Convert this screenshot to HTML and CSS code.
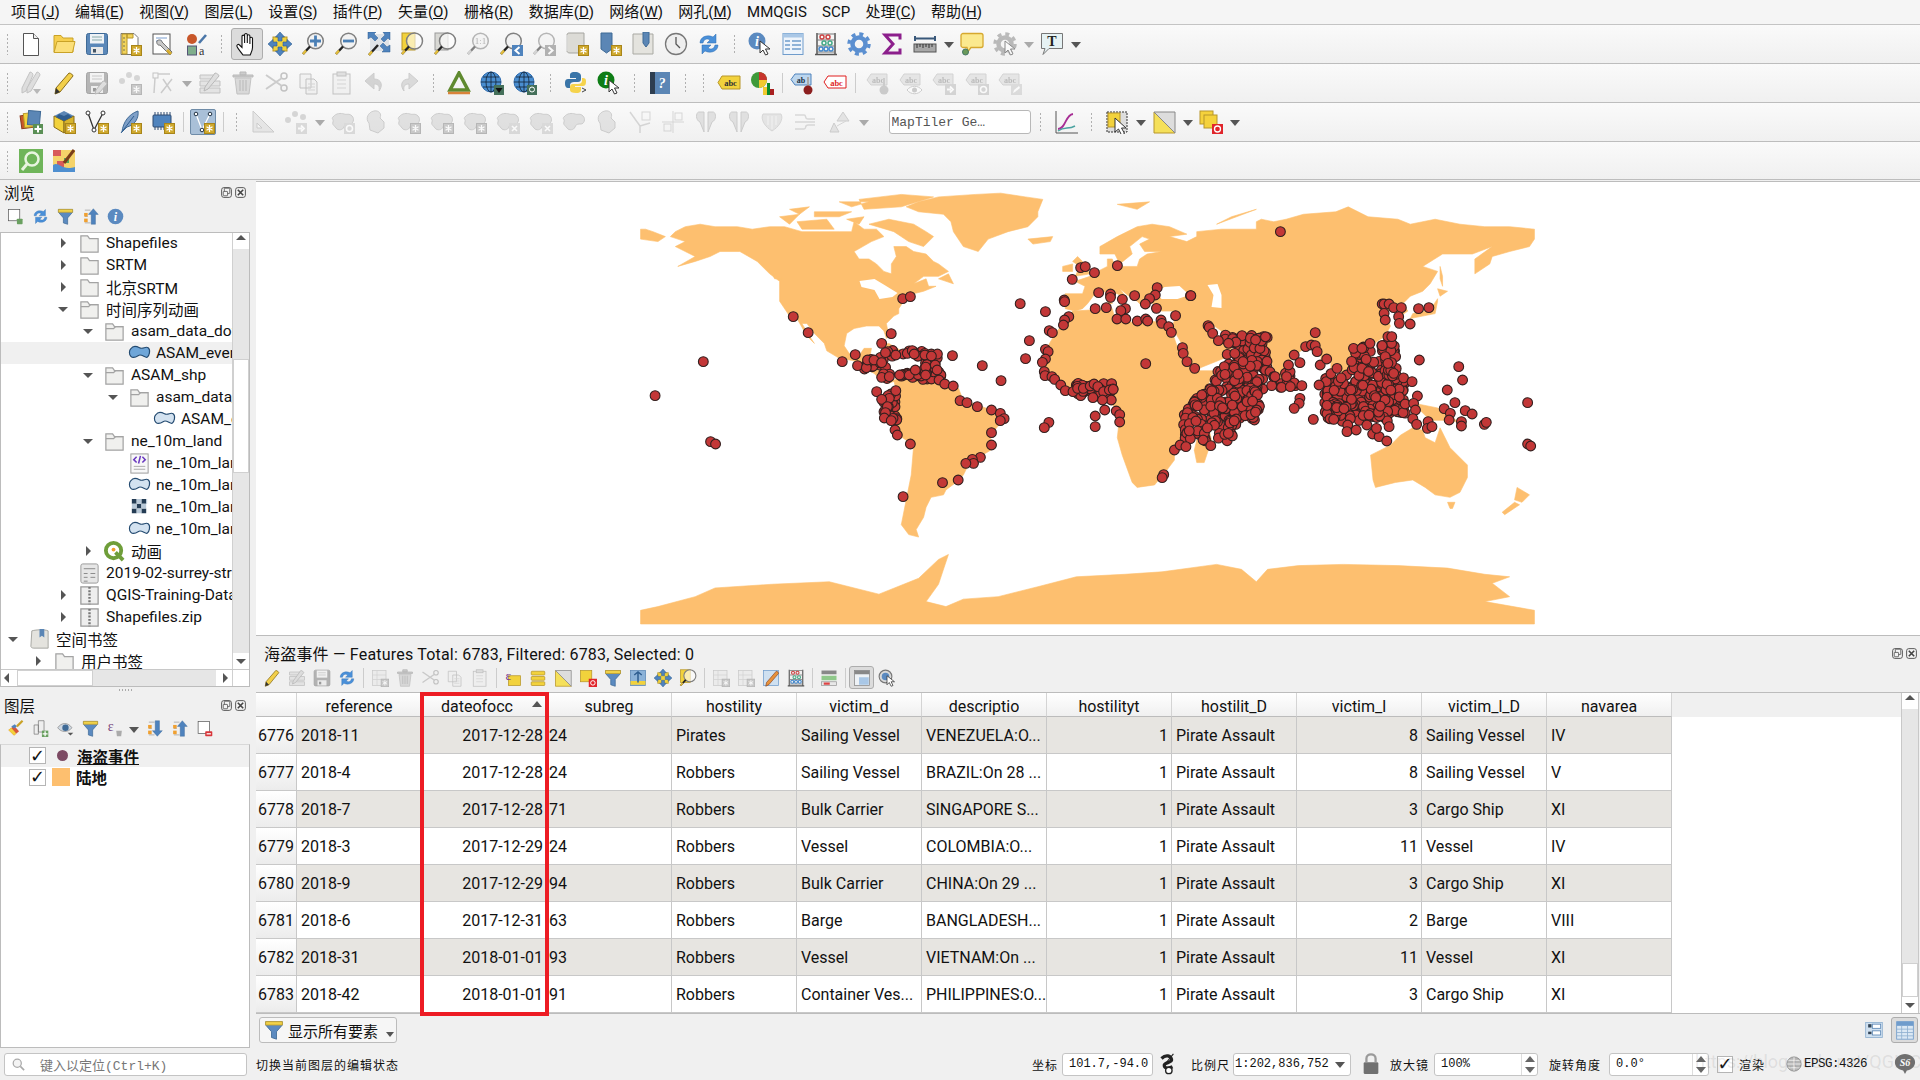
FILE: index.html
```html
<!DOCTYPE html>
<html lang="zh-CN">
<head>
  <meta charset="UTF-8"/>
  <title>QGIS</title>
  <link rel="stylesheet" href="styles.css">
</head>
<body>
  <!-- icon set -->
  <svg class="defs" aria-hidden="true">
    <symbol id="badge" viewBox="0 0 24 24"><rect x="13.5" y="13.5" width="10" height="10" fill="#cfa82c" stroke="#a8851a"/><path d="M18.5 15v7M15.5 16.7l6 3.6M21.5 16.7l-6 3.6" stroke="#fff" stroke-width="1.3"/></symbol>
    <symbol id="cursor" viewBox="0 0 24 24"><path d="M12 9v12l3-3 2.5 5 2.5-1-2.5-5H22z" fill="#fff" stroke="#333"/></symbol>
    <symbol id="mag" viewBox="0 0 24 24"><circle cx="14.5" cy="9" r="7.8" fill="#f2f2f2" stroke="#808080" stroke-width="1.5"/><path d="M9 14.5 2 22" stroke="#222" stroke-width="2.4"/><path d="M5 18.5 2 22" stroke="#e3bd3c" stroke-width="2.4"/></symbol>
    <symbol id="blob" viewBox="0 0 24 24"><path d="M2 7c3-4 8-4 11-3s5-1 8 2 1 8-2 8-5 0-6 3-6 4-8 1-4-3-3-6-2-3 0-5z" fill="#cfcfc9" stroke="#a9a9a3"/></symbol>
    <symbol id="tag" viewBox="0 0 24 24"><path d="M5 3h16v11H5l-4-5z" fill="#d8d8d2" stroke="#b5b5af"/><text x="12" y="12" class="svgt" font-size="8" fill="#8c8c88" text-anchor="middle">abc</text></symbol>
    <symbol id="new" viewBox="0 0 24 24"><path d="M4.5 1.5h10l5 5v17h-15z" fill="#fff" stroke="#555"/><path d="M14.5 1.5v5h5" fill="#eee" stroke="#555"/></symbol>
    <symbol id="open" viewBox="0 0 24 24"><path d="M2 3.500h7l2 2.500h10v14H2z" fill="#f6cf4e" stroke="#c9a227"/><path d="M2 20.500 5 9.500h18l-2.500 11z" fill="#fbdf7a" stroke="#c9a227"/></symbol>
    <symbol id="save" viewBox="0 0 24 24"><rect x="1.500" y="1.500" width="21" height="21" rx="2" fill="#5a87b8" stroke="#3f6a96"/><rect x="5" y="2" width="14" height="9.500" fill="#eef2f6"/><path d="M7 5h10M7 8h10" stroke="#8aa"/><rect x="6" y="15" width="12" height="7" fill="#e8e8e8"/><rect x="8" y="17" width="3" height="3.500" fill="#456"/></symbol>
    <symbol id="saveas" viewBox="0 0 24 24"><path d="M3 1.500h13l4 4v17H3z" fill="#fff" stroke="#777"/><path d="M4 2h5v20H4zM9 2h6v4H9z" fill="#f2d45c" stroke="#b7962a"/><path d="M5 6h2M5 10h2M5 14h2M5 18h2" stroke="#775"/><use href="#badge"/></symbol>
    <symbol id="props" viewBox="0 0 24 24"><rect x="2" y="2" width="17" height="20" fill="#fff" stroke="#555"/><path d="M5 6h11M5 9h6" stroke="#7b9ecf"/><path d="M6 9c2-2 5-1 5 1l10 10-2 3L9 13c-2 1-4-2-3-4z" fill="#c9c9c9" stroke="#555" stroke-width=".8"/><path d="m16 18 4 4" stroke="#d8ae2e" stroke-width="3"/></symbol>
    <symbol id="style" viewBox="0 0 24 24"><circle cx="8" cy="7" r="5" fill="#c8572a"/><path d="m15 11 7-8" stroke="#4a76a8" stroke-width="2.600"/><rect x="3.500" y="14" width="9" height="9" fill="#7fae8c" stroke="#557"/><text x="15" y="23" class="svgs" font-size="12" fill="#333">a</text></symbol>
    <symbol id="hand" viewBox="0 0 24 24"><path d="M8 23c-2-3-5-6-6-8.500-.6-1.700 1.300-2.800 2.500-1.500L7 15.500V4.500c0-1.800 2.600-1.800 2.600 0V11 2.800c0-1.800 2.700-1.800 2.700 0V11 4c0-1.700 2.600-1.700 2.600 0v8V6.500c0-1.600 2.600-1.600 2.600 0v9c0 3-1.300 5-2.300 7.500z" fill="#fff" stroke="#111" stroke-width="1.100"/></symbol>
    <symbol id="pansel" viewBox="0 0 24 24"><rect x="5" y="5" width="14" height="14" fill="#f2d23c" stroke="#b7962a"/><path d="m12 0 4.500 5h-2.500v4h-4V5H7.500zm0 24-4.500-5H10v-4h4v4h2.500zM0 12l5-4.500V10h4v4H5v2.500zm24 0-5 4.500V14h-4v-4h4V7.500z" fill="#4f83bd" stroke="#2e5d90" stroke-width=".6"/></symbol>
    <symbol id="zoomin" viewBox="0 0 24 24"><use href="#mag"/><path d="M14.500 3.500v11M9 9h11" stroke="#4a7fb5" stroke-width="2.800"/></symbol>
    <symbol id="zoomout" viewBox="0 0 24 24"><use href="#mag"/><path d="M9 9h11" stroke="#4a7fb5" stroke-width="2.800"/></symbol>
    <symbol id="zoomfull" viewBox="0 0 24 24"><rect x="3" y="2" width="19" height="17" fill="#dfe3e8"/><path d="M1 0h8L7 2l4 4-3 3-4-4-3 2zM23 0v8l-2-2-4 4-3-3 4-4-2-3zM23 20h-8l2-2-4-4 3-3 4 4 3-2z" fill="#4f83bd" stroke="#2e5d90" stroke-width=".5"/><path d="M11 13 2 23" stroke="#222" stroke-width="2.400"/><path d="M5 19.500 2 23" stroke="#e3bd3c" stroke-width="2.400"/></symbol>
    <symbol id="zoomsel" viewBox="0 0 24 24"><rect x="2" y="1" width="13" height="17" fill="#f2d23c" stroke="#b7962a"/><circle cx="14.500" cy="9" r="8" fill="#fff" fill-opacity=".6" stroke="#808080" stroke-width="1.500"/><path d="M9 14.500 2 22" stroke="#222" stroke-width="2.400"/><path d="M5 18.500 2 22" stroke="#e3bd3c" stroke-width="2.400"/></symbol>
    <symbol id="zoomlay" viewBox="0 0 24 24"><rect x="2" y="1" width="13" height="17" fill="#d8d8d4" stroke="#999"/><circle cx="14.500" cy="9" r="8" fill="#fff" fill-opacity=".7" stroke="#808080" stroke-width="1.500"/><path d="M9 14.500 2 22" stroke="#222" stroke-width="2.400"/><path d="M5 18.500 2 22" stroke="#e3bd3c" stroke-width="2.400"/></symbol>
    <symbol id="zoom11" viewBox="0 0 24 24"><use href="#mag"/><text x="14.500" y="12" class="svgs" font-size="9" fill="#777" text-anchor="middle">1:1</text></symbol>
    <symbol id="zoomlast" viewBox="0 0 24 24"><use href="#mag"/><rect x="13" y="13" width="11" height="11" fill="#4f83bd"/><path d="m20.500 15-4 3.500 4 3.500" fill="none" stroke="#fff" stroke-width="2"/></symbol>
    <symbol id="zoomnext" viewBox="0 0 24 24"><use href="#mag"/><rect x="13" y="13" width="11" height="11" fill="#4f83bd"/><path d="m16.500 15 4 3.500-4 3.500" fill="none" stroke="#fff" stroke-width="2"/></symbol>
    <symbol id="bmknew" viewBox="0 0 24 24"><path d="M2 3c0-1.500 1-2 2-2h15v20H5c-2 0-3-1-3-2z" fill="#dcdbd6" stroke="#a5a5a0"/><path d="M2 3v16" stroke="#eee"/><use href="#badge"/></symbol>
    <symbol id="bmk" viewBox="0 0 24 24"><path d="M3 1h11v16l-5.500 4L3 17z" fill="#5b86b5" stroke="#3f6a96"/><use href="#badge"/></symbol>
    <symbol id="bmkdoc" viewBox="0 0 24 24"><path d="M2 2h20v20H2z" fill="#e4e3de" stroke="#a9a9a3"/><path d="M12 0h6v11l-3 4-3-4z" fill="#5b86b5" stroke="#3f6a96"/></symbol>
    <symbol id="clock" viewBox="0 0 24 24"><circle cx="12" cy="12" r="10.500" fill="#eee" stroke="#777" stroke-width="1.300"/><path d="M12 5v7l4 4" fill="none" stroke="#555" stroke-width="1.300"/></symbol>
    <symbol id="refresh" viewBox="0 0 24 24"><path d="M3 11c0-6 7-9 13-6l3-3v9h-9l3-3c-3-2-6-1-7 3z" fill="#4a90d9" stroke="#2e6cb0" stroke-width=".5"/><path d="M21 13c0 6-7 9-13 6l-3 3v-9h9l-3 3c3 2 6 1 7-3z" fill="#4a90d9" stroke="#2e6cb0" stroke-width=".5"/></symbol>
    <symbol id="ident" viewBox="0 0 24 24"><circle cx="9" cy="9" r="8.500" fill="#5b8ac0"/><text x="9" y="14" class="svgb" font-size="14" fill="#fff" text-anchor="middle">i</text><use href="#cursor"/></symbol>
    <symbol id="table" viewBox="0 0 24 24"><rect x="2" y="1.500" width="20" height="21" fill="#eef4fb" stroke="#6f9ccc"/><rect x="2" y="1.500" width="20" height="4" fill="#a9c7e6"/><path d="M4 9h5M11 9h9M4 13h5M11 13h9M4 17h5M11 17h9" stroke="#6f9ccc" stroke-width="1.400"/></symbol>
    <symbol id="abacus" viewBox="0 0 24 24"><path d="M3 1v21M21 1v21M1 22.500h22" stroke="#555" stroke-width="1.500"/><path d="M3 2h18M3 8h18M3 14h18M3 20h18" stroke="#777"/><g fill="none" stroke-width="1.500"><circle cx="8" cy="5" r="2" stroke="#c44"/><circle cx="14" cy="5" r="2" stroke="#c44"/><circle cx="10" cy="11" r="2" stroke="#4a8"/><circle cx="16" cy="11" r="2" stroke="#4a8"/><circle cx="7" cy="17" r="2" stroke="#48c"/><circle cx="12" cy="17" r="2" stroke="#48c"/><circle cx="17" cy="17" r="2" stroke="#48c"/></g></symbol>
    <symbol id="gear" viewBox="0 0 24 24"><circle cx="12" cy="12" r="6.500" fill="none" stroke="#5b8fd0" stroke-width="4.500"/><circle cx="12" cy="12" r="10" fill="none" stroke="#5b8fd0" stroke-width="3.500" stroke-dasharray="4 3.850"/></symbol>
    <symbol id="sigma" viewBox="0 0 24 24"><path d="M20 7.500V3H5l8 9-8 9h15v-4.500" fill="none" stroke="#8c1f8c" stroke-width="3"/></symbol>
    <symbol id="ruler" viewBox="0 0 24 24"><path d="M2 6.500h20M2 4v5M22 4v5" stroke="#39587a" stroke-width="2"/><rect x="1" y="12" width="22" height="8" fill="#a8a8a8" stroke="#555"/><path d="M4 12v4M7 12v3M10 12v4M13 12v3M16 12v4M19 12v3" stroke="#333"/></symbol>
    <symbol id="tip" viewBox="0 0 24 24"><path d="M3 1.500h18c1 0 2 1 2 2v10c0 1-1 2-2 2H11l-3 4-1-4H3c-1 0-2-1-2-2v-10c0-1 1-2 2-2z" fill="#fbe98e" stroke="#d6a82e" stroke-width="1.300"/><circle cx="5.500" cy="20" r="3" fill="#6a9a5a" stroke="#476"/></symbol>
    <symbol id="gearq" viewBox="0 0 24 24"><use href="#gear"/><use href="#cursor"/></symbol>
    <symbol id="tbub" viewBox="0 0 24 24"><path d="M1.500 1.500h21v15H9l-6 6 2-6H1.500z" fill="#e6f2f4" stroke="#777"/><text x="12" y="14" class="svgs" font-size="14" fill="#222" text-anchor="middle" font-weight="700">T</text></symbol>
    <symbol id="pencil" viewBox="0 0 24 24"><path d="M17 2c2 0 4 2 4 3L8 21l-5 2 1-6z" fill="#f2cf4a" stroke="#8a6d1a"/><path d="m3 23 1-6 4 4z" fill="#333"/></symbol>
    <symbol id="editall" viewBox="0 0 24 24"><path d="M11 1c2 0 3 2 3 3L7 20l-4 2 0-5z" fill="#ccc" stroke="#999"/><path d="M18 1c2 0 3 2 3 3L12 20l-4 2 0-5z" fill="#ccc" stroke="#999"/><path d="m14 18 4 5 4-5z" fill="#888"/></symbol>
    <symbol id="saveed" viewBox="0 0 24 24"><use href="#save"/><path d="M18 10c2 0 4 2 4 3l-8 9-4 1 1-4z" fill="#ccc" stroke="#888"/></symbol>
    <symbol id="addpt" viewBox="0 0 24 24"><circle cx="4" cy="10" r="3" fill="#bbb"/><circle cx="11" cy="4" r="3" fill="#bbb"/><circle cx="19" cy="7" r="3" fill="#bbb"/><use href="#badge"/></symbol>
    <symbol id="vtool" viewBox="0 0 24 24"><rect x="2" y="2" width="5" height="5" fill="none" stroke="#999"/><path d="M7 3h12M4 7 3 22M10 22l11-14M12 8l8 12" stroke="#aaa" stroke-width="1.500"/></symbol>
    <symbol id="digit" viewBox="0 0 24 24"><path d="M2 4h15v4H2zM2 10h20v5H2zM2 17h20v5H2z" fill="#d8d8c8" stroke="#999"/><path d="M17 2c2 0 4 2 4 3L10 18l-4 2 1-4z" fill="#ccc" stroke="#888"/></symbol>
    <symbol id="trash" viewBox="0 0 24 24"><path d="M2 4h20v2H2zM9 1h6v3H9z" fill="#aaa" stroke="#888"/><path d="M4 7h16l-2 16H6z" fill="#c8c4be" stroke="#999"/><path d="M9 9v11M12 9v11M15 9v11" stroke="#888"/></symbol>
    <symbol id="cut" viewBox="0 0 24 24"><circle cx="20" cy="5" r="3" fill="none" stroke="#999" stroke-width="1.500"/><circle cx="20" cy="17" r="3" fill="none" stroke="#999" stroke-width="1.500"/><path d="M2 4 18 15M2 18 18 7" stroke="#aaa" stroke-width="2"/></symbol>
    <symbol id="copy" viewBox="0 0 24 24"><path d="M3 3h11v14H3zM9 8h8l3 3v12H9z" fill="#eee" stroke="#999"/><path d="M11 13h7M11 16h7M11 19h7" stroke="#bbb"/></symbol>
    <symbol id="paste" viewBox="0 0 24 24"><rect x="3" y="3" width="17" height="20" fill="#eee" stroke="#999"/><rect x="7" y="1" width="9" height="4" fill="#ccc" stroke="#999"/><path d="M7 9h9M7 13h9M7 17h9" stroke="#bbb"/></symbol>
    <symbol id="undo" viewBox="0 0 24 24"><path d="M11 2 2 10l9 8v-5c4 0 6 2 5 7 4-5 3-12-5-12z" fill="#bdb9b3" stroke="#aaa"/></symbol>
    <symbol id="redo" viewBox="0 0 24 24"><path d="m13 2 9 8-9 8v-5c-4 0-6 2-5 7-4-5-3-12 5-12z" fill="#c4c4bf" stroke="#aaa"/></symbol>
    <symbol id="tri" viewBox="0 0 24 24"><path d="M12 2 3 19h18z" fill="none" stroke="#5f8a2f" stroke-width="3.500"/><path d="M1 22h22" stroke="#d9833a" stroke-width="2.500"/></symbol>
    <symbol id="globe" viewBox="0 0 24 24"><circle cx="11" cy="11" r="10" fill="#4a8ed0" stroke="#2e6cb0"/><path d="M1 11h20M3 6h16M3 16h16M11 1v20" stroke="#123" stroke-width=".8"/><ellipse cx="11" cy="11" rx="5" ry="10" fill="none" stroke="#123" stroke-width=".8"/></symbol>
    <symbol id="globed" viewBox="0 0 24 24"><use href="#globe"/><rect x="14" y="14" width="10" height="10" fill="#45705a"/><path d="m15.500 17 3.500 5 3.500-5z" fill="#111"/></symbol>
    <symbol id="globeq" viewBox="0 0 24 24"><use href="#globe"/><rect x="14" y="14" width="10" height="10" fill="#45705a"/><circle cx="19" cy="18.500" r="2.500" fill="none" stroke="#fff"/></symbol>
    <symbol id="python" viewBox="0 0 24 24"><path d="M11 1C6 1 6 3 6 5v2h6v1H4c-3 0-3 3-3 5s1 4 3 4h2v-3c0-2 2-3 4-3h4c2 0 3-1 3-3V5c0-2-2-4-6-4z" fill="#3a75a8"/><path d="M12 22c5 0 5-2 5-4v-2h-6v-1h8c3 0 3-3 3-5s-1-3-3-3h-1v3c0 2-2 3-4 3H9c-2 0-3 1-3 3v3c0 2 2 3 6 3z" fill="#f5d34c"/><path d="m18 17 4 2-4 2" fill="none" stroke="#444"/></symbol>
    <symbol id="igreen" viewBox="0 0 24 24"><circle cx="9" cy="9" r="8.500" fill="#0e7d16"/><text x="9" y="14" class="svgb" font-size="14" fill="#fff" text-anchor="middle">i</text><use href="#cursor"/></symbol>
    <symbol id="book" viewBox="0 0 24 24"><rect x="2" y="1" width="20" height="22" fill="#5b86b5"/><rect x="2" y="1" width="5" height="22" fill="#2e3e50"/><text x="14" y="17" class="svgb" font-size="14" fill="#fff" text-anchor="middle">?</text></symbol>
    <symbol id="abcy" viewBox="0 0 24 24"><path d="M5 5h18v13H5l-4-6.500z" fill="#f2d23c" stroke="#b7962a"/><text x="13.500" y="15" class="svgt" font-size="8.500" fill="#333" text-anchor="middle">abc</text></symbol>
    <symbol id="pie" viewBox="0 0 24 24"><circle cx="9" cy="9" r="8" fill="#3e9a3a"/><path d="M9 9V1a8 8 0 0 1 8 8z" fill="#c8352c"/><path d="M9 9h8a8 8 0 0 1-8 8z" fill="#f0c92f"/><path d="M13 16h4v8h-4z" fill="#f0c92f"/><path d="M17 12h3v12h-3z" fill="#0a8a2a"/><path d="M20 18h4v6h-4z" fill="#a81f1f"/></symbol>
    <symbol id="abcb" viewBox="0 0 24 24"><path d="M5 3h16v11H5l-4-5.500z" fill="#bcd6ee" stroke="#4f83bd"/><text x="11" y="12" class="svgt" font-size="8" fill="#234" text-anchor="middle">ab</text><path d="M18 6v11" stroke="#aaa" stroke-width="2"/><circle cx="18" cy="19" r="4.500" fill="#8c1f1f"/></symbol>
    <symbol id="abcr" viewBox="0 0 24 24"><path d="M5 5h18v12H5l-4-6z" fill="#fff" stroke="#e01f1f"/><text x="13.500" y="14.500" class="svgt" font-size="8.500" fill="#e01f1f" text-anchor="middle">abc</text></symbol>
    <symbol id="tagpin" viewBox="0 0 24 24"><use href="#tag"/><path d="M18 7v9" stroke="#aaa" stroke-width="2"/><circle cx="18" cy="19" r="4.500" fill="#aaa"/></symbol>
    <symbol id="tageye" viewBox="0 0 24 24"><use href="#tag"/><path d="M8 19c4-5 11-5 15 0-4 5-11 5-15 0z" fill="#fff" stroke="#aaa"/><circle cx="15.500" cy="19" r="2.500" fill="#aaa"/></symbol>
    <symbol id="tagmv" viewBox="0 0 24 24"><use href="#tag"/><rect x="13" y="13" width="11" height="11" fill="#bbb"/><path d="M15 18.500h4M18 15.500l3 3-3 3" fill="none" stroke="#fff" stroke-width="1.800"/></symbol>
    <symbol id="tagrot" viewBox="0 0 24 24"><use href="#tag"/><rect x="13" y="13" width="11" height="11" fill="#bbb"/><circle cx="18.500" cy="18.500" r="3" fill="none" stroke="#fff" stroke-width="1.600"/></symbol>
    <symbol id="tagpen" viewBox="0 0 24 24"><use href="#tag"/><rect x="13" y="13" width="11" height="11" fill="#c8c8c4"/><path d="m15 22 1-3 5-4 1 2-5 4z" fill="#fff"/></symbol>
    <symbol id="addlay" viewBox="0 0 24 24"><path d="M2 5h11v13H2z" fill="#c8572a" stroke="#8a3a1a" transform="rotate(-8 8 12)"/><path d="M5 3h12v14H5z" fill="#f2d23c" stroke="#b7962a" transform="rotate(-6 11 10)"/><path d="M9 1h12v14H9z" fill="#5b86b5" stroke="#3f6a96" transform="rotate(5 15 8)"/><rect x="14" y="14" width="10" height="10" fill="#5a8f55"/><path d="M19 15.500v7M15.500 19h7" stroke="#fff" stroke-width="2"/></symbol>
    <symbol id="cube" viewBox="0 0 24 24"><path d="m12 1 10 5v8l-10 6L2 14V6z" fill="#5b86b5"/><path d="M2 6l10 5v12L2 17z" fill="#f2d23c" stroke="#8a6d1a"/><path d="m12 11 10-5v11l-10 6z" fill="#d6b42e" stroke="#8a6d1a"/><path d="m7 4 5 2 4-2 4 3-8 4-8-4z" fill="#2e5d90"/><use href="#badge"/></symbol>
    <symbol id="vline" viewBox="0 0 24 24"><path d="M3 3 9 20l9-17" fill="none" stroke="#333" stroke-width="1.300"/><g fill="#fff" stroke="#333"><circle cx="3" cy="3" r="2"/><circle cx="9" cy="20" r="2"/><circle cx="18" cy="3" r="2"/></g><use href="#badge"/></symbol>
    <symbol id="feather" viewBox="0 0 24 24"><path d="M20 1c1 7-3 14-11 16l-5 5c1-10 7-18 16-21z" fill="#7fa0c8" stroke="#3f6a96"/><path d="M3 23 16 6" stroke="#2e5d90"/><use href="#badge"/></symbol>
    <symbol id="chip" viewBox="0 0 24 24"><rect x="2" y="5" width="18" height="12" rx="1" fill="#4f83bd" stroke="#2e4a70"/><path d="M4 2v3M7 2v3M10 2v3M13 2v3M16 2v3M19 2v3M4 17v3M7 17v3M10 17v3M13 17v3" stroke="#2e4a70"/><use href="#badge"/></symbol>
    <symbol id="vbox" viewBox="0 0 24 24"><path d="M5 4 11 20l8-16" fill="none" stroke="#fff" stroke-width="1.300"/><g fill="#fff" stroke="#234"><circle cx="5" cy="4" r="1.800"/><circle cx="11" cy="20" r="1.800"/><circle cx="19" cy="4" r="1.800"/></g><use href="#badge"/></symbol>
    <symbol id="rtri" viewBox="0 0 24 24"><path d="M2 1v21h21zM6 13v5h5z" fill="#dedad4" fill-rule="evenodd" stroke="#aaa"/></symbol>
    <symbol id="dots" viewBox="0 0 24 24"><circle cx="4" cy="10" r="3" fill="#bbb"/><circle cx="11" cy="4" r="3" fill="#bbb"/><circle cx="19" cy="7" r="3" fill="#bbb"/><rect x="12" y="13" width="11" height="11" fill="#c4c4c0"/><path d="M14 18.500h4M17 15.500l3 3-3 3" fill="none" stroke="#fff" stroke-width="1.800"/></symbol>
    <symbol id="blobrot" viewBox="0 0 24 24"><use href="#blob"/><rect x="13" y="13" width="11" height="11" fill="#c4c4c0"/><circle cx="18.500" cy="18.500" r="3" fill="none" stroke="#fff" stroke-width="1.600"/></symbol>
    <symbol id="hexa" viewBox="0 0 24 24"><path d="M10 1c5-1 8 3 6 7l4 4v6l-6 5-8-3-1-7C1 9 4 2 10 1z" fill="#d4d4ce" stroke="#aaa"/></symbol>
    <symbol id="blobadd" viewBox="0 0 24 24"><use href="#blob"/><use href="#badge"/></symbol>
    <symbol id="blobdel" viewBox="0 0 24 24"><use href="#blob"/><rect x="13" y="13" width="11" height="11" fill="#c4c4c0"/><path d="m16 16 5 5m0-5-5 5" stroke="#fff" stroke-width="1.600"/></symbol>
    <symbol id="seg" viewBox="0 0 24 24"><path d="M2 2 12 16M12 16v7M12 16l10-3" stroke="#bbb" stroke-width="1.500"/><rect x="14" y="2" width="8" height="8" fill="none" stroke="#bbb"/></symbol>
    <symbol id="split" viewBox="0 0 24 24"><path d="M12 1v22M1 12h22" stroke="#bbb"/><rect x="14" y="3" width="7" height="7" fill="none" stroke="#bbb"/><rect x="3" y="14" width="7" height="7" fill="none" stroke="#bbb"/></symbol>
    <symbol id="sciss" viewBox="0 0 24 24"><path d="M5 2c-3 0-4 8 1 10l4 10V2zM19 2c3 0 4 8-1 10l-4 10V2z" fill="#cfcfc9" stroke="#aaa"/></symbol>
    <symbol id="shell" viewBox="0 0 24 24"><path d="M3 4h18c3 5-2 13-9 17C5 17 0 9 3 4z" fill="#d6d6d0" stroke="#bbb"/><path d="M8 6v9M12 6v13M16 6v9" stroke="#f0f0f0"/></symbol>
    <symbol id="lines" viewBox="0 0 24 24"><path d="M2 5h9c3 0 0 4 4 4h7M2 12h20M2 19h9c3 0 0-4 4-4h7" fill="none" stroke="#c0c0c0" stroke-width="1.500"/></symbol>
    <symbol id="offtri" viewBox="0 0 24 24"><path d="m15 2 6 9H9zM2 22l4-9 5 9z" fill="#d4d4ce" stroke="#aaa"/><path d="m9 16 9-5" stroke="#bbb"/></symbol>
    <symbol id="curve" viewBox="0 0 24 24"><path d="M2 1v22h22" fill="none" stroke="#555"/><path d="M4 19c8 0 7-14 15-15" fill="none" stroke="#a72e94" stroke-width="1.800"/><path d="M4 21c7-5 10-1 17-5" fill="none" stroke="#4aa3a0" stroke-width="1.500"/></symbol>
    <symbol id="selrect" viewBox="0 0 24 24"><rect x="2" y="2" width="20" height="20" fill="#ddd" stroke="#333" stroke-dasharray="2 1"/><rect x="3" y="3" width="12" height="14" fill="#f2d23c" stroke="#b7962a"/><path d="M10 8v14l3.500-3 3 6 3-1.500-3-5.500H21z" fill="#fff" stroke="#333"/></symbol>
    <symbol id="seltri" viewBox="0 0 24 24"><path d="M2 2v21h21z" fill="#f5e05a" stroke="#b7962a"/><path d="M2 2h21v21z" fill="#ddd" stroke="#888"/></symbol>
    <symbol id="seldel" viewBox="0 0 24 24"><rect x="1" y="1" width="13" height="13" fill="#f5d23c" stroke="#b7962a"/><rect x="5" y="5" width="13" height="13" fill="#f5d23c" stroke="#b7962a"/><rect x="13" y="14" width="11" height="10" fill="#e0252b"/><circle cx="18.500" cy="19" r="3" fill="none" stroke="#fff" stroke-width="1.300"/></symbol>
    <symbol id="qsearch" viewBox="0 0 24 24"><rect width="24" height="24" fill="#6fb55a"/><circle cx="13" cy="10" r="6.500" fill="none" stroke="#e8f5e0" stroke-width="2.500"/><path d="m8 15-5 6" stroke="#e8f5e0" stroke-width="3"/></symbol>
    <symbol id="mapedit" viewBox="0 0 24 24"><rect x="1" y="1" width="22" height="22" fill="#f5d36a"/><path d="M1 1h8v6H1zM5 12h7v6H5z" fill="#d85a5a"/><path d="M1 16c6-4 8 6 22 2v5H1z" fill="#4f8fd0"/><path d="M12 9h5v5h-5z" fill="#5aa85a"/><path d="M22 1 12 14" stroke="#7a3e1a" stroke-width="3"/></symbol>
    <symbol id="filter" viewBox="0 0 24 24"><path d="M2 2h20v4l-7 8v9l-6-2v-7L2 6z" fill="#5b8ac0" stroke="#3f6a96"/><path d="M2 2h20v4H2z" fill="#f0d24a" stroke="#c9a227"/></symbol>
    <symbol id="collapse" viewBox="0 0 24 24"><path d="M4 3h8M4 12h4M4 21h8" stroke="#999"/><rect x="3" y="7" width="5" height="5" fill="#f0a030"/><rect x="3" y="15" width="5" height="5" fill="#f0a030"/><path d="m16 1 7 8h-4v14h-6V9H9z" fill="#4f83bd" stroke="#2e5d90" stroke-width=".5"/></symbol>
    <symbol id="expand" viewBox="0 0 24 24"><path d="M4 3h8M4 12h4M4 21h8" stroke="#999"/><rect x="3" y="7" width="5" height="5" fill="#f0a030"/><rect x="3" y="15" width="5" height="5" fill="#f0a030"/><path d="m16 23 7-8h-4V1h-6v14H9z" fill="#4f83bd" stroke="#2e5d90" stroke-width=".5"/></symbol>
    <symbol id="info" viewBox="0 0 24 24"><circle cx="12" cy="12" r="11" fill="#5b8ac0"/><text x="12" y="18" class="svgb" font-size="17" fill="#fff" text-anchor="middle">i</text></symbol>
    <symbol id="brush" viewBox="0 0 24 24"><path d="M2 14 10 8l7 8-7 6z" fill="#d8573a"/><path d="M2 14l4-3 7 8-3 3z" fill="#f2d23c"/><path d="m6 9 5-3 3 3-4 3z" fill="#4f83bd"/><path d="M14 9 22 1" stroke="#c9a227" stroke-width="3"/></symbol>
    <symbol id="addgroup" viewBox="0 0 24 24"><path d="M9 1h8v16H9zM3 7h6v13H3z" fill="#eee" stroke="#777"/><rect x="14" y="15" width="9" height="9" fill="#6aa060"/><path d="M18.500 16v7M15 19.500h7" stroke="#fff" stroke-width="1.800"/></symbol>
    <symbol id="eye" viewBox="0 0 24 24"><path d="M1 11c5-8 15-8 20 0-5 7-15 7-20 0z" fill="#cfd8e2" stroke="#888"/><circle cx="12" cy="11" r="4.500" fill="#3f6a96"/><path d="m15 18 4 4 4-4z" fill="#555"/></symbol>
    <symbol id="eps" viewBox="0 0 24 24"><text x="1" y="16" class="svgs" font-size="20" fill="#7a4a80">ε</text><path d="M13 15h8l-1 8h-6z" fill="#aaa"/></symbol>
    <symbol id="remove" viewBox="0 0 24 24"><rect x="3" y="2" width="16" height="17" fill="#fff" stroke="#555"/><rect x="13" y="16" width="10" height="7" rx="1" fill="#d8353a"/><path d="M15 19.500h6" stroke="#fff" stroke-width="1.800"/></symbol>
    <symbol id="newattr" viewBox="0 0 24 24"><rect x="2" y="2" width="18" height="20" fill="#e8e8e4" stroke="#aaa"/><path d="M2 8h18M2 14h18M8 2v20" stroke="#bbb"/><use href="#badge"/></symbol>
    <symbol id="eps2" viewBox="0 0 24 24"><rect x="6" y="9" width="16" height="13" fill="#f2d23c" stroke="#b7962a"/><text x="2" y="14" class="svgs" font-size="18" fill="#7a3a90">ε</text></symbol>
    <symbol id="bars" viewBox="0 0 24 24"><rect x="3" y="3" width="18" height="5" rx="1" fill="#f2d23c" stroke="#b7962a"/><rect x="3" y="10" width="18" height="5" rx="1" fill="#f2d23c" stroke="#b7962a"/><rect x="3" y="17" width="18" height="5" rx="1" fill="#f2d23c" stroke="#b7962a"/></symbol>
    <symbol id="selmov" viewBox="0 0 24 24"><rect x="2" y="2" width="20" height="20" fill="#8cb2d8" stroke="#5b86b5"/><rect x="2" y="16" width="20" height="5" fill="#f2d23c"/><path d="M12 4v14M7 8l5-4 5 4" fill="none" stroke="#2e5d90" stroke-width="2"/></symbol>
    <symbol id="seladd" viewBox="0 0 24 24"><rect x="2" y="2" width="15" height="15" fill="#f2d23c" stroke="#b7962a"/><rect x="13" y="13" width="11" height="11" fill="#e0252b"/><circle cx="18.500" cy="18.500" r="3" fill="none" stroke="#fff" stroke-width="1.300"/></symbol>
    <symbol id="coledit" viewBox="0 0 24 24"><rect x="2" y="2" width="20" height="20" fill="#cfe0f0" stroke="#6f9ccc"/><path d="M19 3c2 0 3 2 3 3L9 21l-4 2 1-5z" fill="#e8913a" stroke="#803a1a" stroke-width=".8"/></symbol>
    <symbol id="form" viewBox="0 0 24 24"><rect x="2" y="2" width="20" height="5" fill="#888"/><rect x="2" y="9" width="20" height="6" fill="#8fc88a"/><rect x="2" y="17" width="20" height="5" fill="#e8e8e8" stroke="#999"/><rect x="5" y="18" width="8" height="3" fill="#d44"/></symbol>
    <symbol id="formt" viewBox="0 0 24 24"><rect x="2" y="2" width="20" height="20" fill="#eef2f6" stroke="#888"/><rect x="2" y="2" width="20" height="5" fill="#888"/><rect x="8" y="11" width="13" height="10" fill="#a9c7e6"/></symbol>
    <symbol id="dock" viewBox="0 0 24 24"><rect x="3" y="3" width="18" height="18" rx="4" fill="#f4f4f4" stroke="#555" stroke-width="1.800"/><rect x="8" y="4" width="10" height="10" rx="1" fill="none" stroke="#555" stroke-width="1.500"/><rect x="6" y="10" width="8" height="8" rx="1" fill="#f4f4f4" stroke="#555" stroke-width="1.500"/></symbol>
    <symbol id="dockx" viewBox="0 0 24 24"><rect x="3" y="3" width="18" height="18" rx="4" fill="#f4f4f4" stroke="#555" stroke-width="1.800"/><path d="m7 7 10 10M17 7 7 17" stroke="#444" stroke-width="3"/></symbol>
    <symbol id="folder" viewBox="0 0 24 24"><path d="M3 4h7l2 3h9v14H3z" fill="#f0f0ee" stroke="#a3a3a3" stroke-width="1.300"/></symbol>
    <symbol id="folder2" viewBox="0 0 24 24"><path d="M3 4h7l2 3h9v14H3z" fill="#f0f0ee" stroke="#a3a3a3" stroke-width="1.300"/><path d="M3 9h8l2-2h8" fill="none" stroke="#a3a3a3" stroke-width="1.300"/></symbol>
    <symbol id="poly" viewBox="0 0 24 24"><path d="M3 7c2-3 5-3 9-1s6-2 9 0 1 9-1 10-6-4-9-2-6 3-8 1-2-6 0-8z" fill="#6fa6d8" stroke="#234a70" stroke-width="1.200"/></symbol>
    <symbol id="poly2" viewBox="0 0 24 24"><path d="M3 7c2-3 5-3 9-1s6-2 9 0 1 9-1 10-6-4-9-2-6 3-8 1-2-6 0-8z" fill="#d3e2f0" stroke="#234a70" stroke-width="1.200"/></symbol>
    <symbol id="xml" viewBox="0 0 24 24"><rect x="3" y="2" width="18" height="20" fill="#f8f8f8" stroke="#999"/><path d="m9 5-3 3 3 3M15 5l3 3-3 3M13 4l-2 8" fill="none" stroke="#6a3ac0" stroke-width="1.600"/><path d="M6 15h12M6 18h12" stroke="#aaa"/></symbol>
    <symbol id="raster" viewBox="0 0 24 24"><path d="M4 3h5v5H4zM14 3h5v5h-5zM9 8h5v5H9zM4 13h5v5H4zM14 13h5v5h-5z" fill="#243c54"/><path d="M9 3h5v5H9zM19 3h1v5h-1zM4 8h5v5H4zM14 8h5v5h-5zM9 13h5v5H9z" fill="#b9c9d8"/></symbol>
    <symbol id="qgis" viewBox="0 0 24 24"><circle cx="11" cy="11" r="8" fill="none" stroke="#6f9e3a" stroke-width="4"/><path d="m13 13 8 8" stroke="#6f9e3a" stroke-width="4"/><circle cx="11" cy="10" r="2" fill="#f0a030"/></symbol>
    <symbol id="csv" viewBox="0 0 24 24"><rect x="3" y="2" width="18" height="20" rx="2" fill="#e6e6e6" stroke="#999"/><path d="M6 7h12M6 12h4M13 12h5M6 16h4M13 16h5M6 20h4" stroke="#888"/></symbol>
    <symbol id="zip" viewBox="0 0 24 24"><rect x="3" y="3" width="18" height="18" fill="#eee" stroke="#999" stroke-width="1.300"/><path d="M12 3v18" stroke="#777" stroke-width="2.500" stroke-dasharray="2 1.500"/></symbol>
    <symbol id="bmkfav" viewBox="0 0 24 24"><path d="M4 3c3-1 13-2 17 0v18H6c-2 0-3-1-3-2z" fill="#e4e3de" stroke="#a5a5a0"/><path d="M12 1h5v9l-2.500-2L12 10z" fill="#5b86b5"/></symbol>
    <symbol id="addfile" viewBox="0 0 24 24"><rect x="2" y="2" width="16" height="16" fill="#fff" stroke="#555"/><rect x="14" y="15" width="8" height="8" rx="1" fill="#6aa060"/></symbol>
    <symbol id="lock" viewBox="0 0 24 24"><rect x="4" y="10" width="16" height="13" rx="1.500" fill="#707070"/><path d="M7 10V6c0-6 10-6 10 0v4" fill="none" stroke="#9a9a9a" stroke-width="2.500"/></symbol>
    <symbol id="capture" viewBox="0 0 24 24"><path d="M6 6c5-5 10-3 11 1s-9 3-8 7 7 2 9 1" fill="none" stroke="#222" stroke-width="3.500"/><circle cx="14" cy="19" r="3.500" fill="#fff" stroke="#222" stroke-width="1.500"/><path d="M19 1 10 12" stroke="#222" stroke-width="1.200"/></symbol>
    <symbol id="crs" viewBox="0 0 24 24"><circle cx="12" cy="12" r="9.500" fill="#b5b5b5" stroke="#808080"/><path d="M3 12h18M12 3v18M4.500 7h15M4.500 17h15" stroke="#fff"/></symbol>
    <symbol id="msg" viewBox="0 0 24 24"><path d="M12 1c6 0 11 4 11 9s-5 9-9 9l-2 4-2-4c-5-1-9-4-9-9s5-9 11-9z" fill="#707070"/><text x="12" y="14" class="svgb" font-size="11" fill="#fff" text-anchor="middle">S6</text></symbol>
    <symbol id="attrview" viewBox="0 0 24 24"><rect x="2" y="3" width="20" height="18" fill="#cfe0f0" stroke="#8fb0d0"/><rect x="5" y="5" width="4" height="4" fill="#345"/><rect x="10" y="5" width="10" height="5" fill="#fff" stroke="#5b86b5"/><rect x="5" y="14" width="4" height="3" fill="#345"/><rect x="10" y="13" width="10" height="5" fill="#fff" stroke="#5b86b5"/></symbol>
    <symbol id="tableview" viewBox="0 0 24 24"><rect x="2" y="2" width="20" height="21" fill="#dbe8f4" stroke="#6f9ccc"/><rect x="2" y="2" width="20" height="5" fill="#6f9ccc"/><path d="M2 11h20M2 15h20M2 19h20M8 7v16M15 7v16" stroke="#8fb0d0"/></symbol>
    <symbol id="search" viewBox="0 0 24 24"><circle cx="10" cy="10" r="6.500" fill="#f4f4f4" stroke="#aaa" stroke-width="2"/><path d="m15 15 6 6" stroke="#aaa" stroke-width="2.500"/></symbol>
    <symbol id="zoomtab" viewBox="0 0 24 24"><circle cx="10" cy="10" r="8.500" fill="#d8d8d8" stroke="#777" stroke-width="1.500"/><circle cx="10" cy="10" r="5" fill="#5b8ac0"/><use href="#cursor"/></symbol>
  </svg>

  <nav class="menu">
    <span>项目(<u>J</u>)</span><span>编辑(<u>E</u>)</span><span>视图(<u>V</u>)</span><span>图层(<u>L</u>)</span><span>设置(<u>S</u>)</span><span>插件(<u>P</u>)</span><span>矢量(<u>O</u>)</span><span>栅格(<u>R</u>)</span><span>数据库(<u>D</u>)</span><span>网络(<u>W</u>)</span><span>网孔(<u>M</u>)</span><span>MMQGIS</span><span>SCP</span><span>处理(<u>C</u>)</span><span>帮助(<u>H</u>)</span>
  </nav>

  <div class="toolbar">
    <i class="hd first"></i>
    <b class="ic"><svg><use href="#new"/></svg></b><b class="ic"><svg><use href="#open"/></svg></b><b class="ic"><svg><use href="#save"/></svg></b><b class="ic"><svg><use href="#saveas"/></svg></b><b class="ic"><svg><use href="#props"/></svg></b><b class="ic"><svg><use href="#style"/></svg></b>
    <i class="hd"></i>
    <b class="ic on"><svg><use href="#hand"/></svg></b><b class="ic"><svg><use href="#pansel"/></svg></b><b class="ic"><svg><use href="#zoomin"/></svg></b><b class="ic"><svg><use href="#zoomout"/></svg></b><b class="ic"><svg><use href="#zoomfull"/></svg></b><b class="ic"><svg><use href="#zoomsel"/></svg></b><b class="ic"><svg><use href="#zoomlay"/></svg></b><b class="ic off"><svg><use href="#zoom11"/></svg></b><b class="ic"><svg><use href="#zoomlast"/></svg></b><b class="ic off"><svg><use href="#zoomnext"/></svg></b><b class="ic"><svg><use href="#bmknew"/></svg></b><b class="ic"><svg><use href="#bmk"/></svg></b><b class="ic"><svg><use href="#bmkdoc"/></svg></b><b class="ic"><svg><use href="#clock"/></svg></b><b class="ic"><svg><use href="#refresh"/></svg></b>
    <i class="hd"></i>
    <b class="ic"><svg><use href="#ident"/></svg></b><b class="ic"><svg><use href="#table"/></svg></b><b class="ic"><svg><use href="#abacus"/></svg></b><b class="ic"><svg><use href="#gear"/></svg></b><b class="ic"><svg><use href="#sigma"/></svg></b><b class="ic"><svg><use href="#ruler"/></svg></b><i class="dd"></i><b class="ic"><svg><use href="#tip"/></svg></b><b class="ic off"><svg><use href="#gearq"/></svg></b><i class="dd off"></i><b class="ic"><svg><use href="#tbub"/></svg></b><i class="dd"></i>
  </div>

  <div class="toolbar">
    <i class="hd first"></i>
    <b class="ic off"><svg><use href="#editall"/></svg></b><b class="ic"><svg><use href="#pencil"/></svg></b><b class="ic off"><svg><use href="#saveed"/></svg></b><b class="ic off"><svg><use href="#addpt"/></svg></b><b class="ic off"><svg><use href="#vtool"/></svg></b><i class="dd off"></i><b class="ic off"><svg><use href="#digit"/></svg></b><b class="ic off"><svg><use href="#trash"/></svg></b><b class="ic off"><svg><use href="#cut"/></svg></b><b class="ic off"><svg><use href="#copy"/></svg></b><b class="ic off"><svg><use href="#paste"/></svg></b><b class="ic off"><svg><use href="#undo"/></svg></b><b class="ic off"><svg><use href="#redo"/></svg></b>
    <i class="hd"></i>
    <b class="ic"><svg><use href="#tri"/></svg></b><b class="ic"><svg><use href="#globed"/></svg></b><b class="ic"><svg><use href="#globeq"/></svg></b>
    <i class="hd"></i>
    <b class="ic"><svg><use href="#python"/></svg></b><b class="ic"><svg><use href="#igreen"/></svg></b>
    <i class="hd"></i>
    <b class="ic"><svg><use href="#book"/></svg></b>
    <i class="hd"></i><i class="hd"></i>
    <b class="ic"><svg><use href="#abcy"/></svg></b><b class="ic"><svg><use href="#pie"/></svg></b>
    <i class="sep wide"></i>
    <b class="ic"><svg><use href="#abcb"/></svg></b><b class="ic"><svg><use href="#abcr"/></svg></b>
    <i class="sep wider"></i>
    <b class="ic off"><svg><use href="#tagpin"/></svg></b><b class="ic off"><svg><use href="#tageye"/></svg></b><b class="ic off"><svg><use href="#tagmv"/></svg></b><b class="ic off"><svg><use href="#tagrot"/></svg></b><b class="ic off"><svg><use href="#tagpen"/></svg></b>
  </div>

  <div class="toolbar">
    <i class="hd first"></i>
    <b class="ic"><svg><use href="#addlay"/></svg></b><b class="ic"><svg><use href="#cube"/></svg></b><b class="ic"><svg><use href="#vline"/></svg></b><b class="ic"><svg><use href="#feather"/></svg></b><b class="ic"><svg><use href="#chip"/></svg></b>
    <i class="sep wide"></i>
    <b class="ic boxed"><svg><use href="#vbox"/></svg></b>
    <i class="sep"></i><i class="hd tight"></i>
    <b class="ic off"><svg><use href="#rtri"/></svg></b><b class="ic off"><svg><use href="#dots"/></svg></b><i class="dd off"></i><b class="ic off"><svg><use href="#blobrot"/></svg></b><b class="ic off"><svg><use href="#hexa"/></svg></b><b class="ic off"><svg><use href="#blobadd"/></svg></b><b class="ic off"><svg><use href="#blobadd"/></svg></b><b class="ic off"><svg><use href="#blobadd"/></svg></b><b class="ic off"><svg><use href="#blobdel"/></svg></b><b class="ic off"><svg><use href="#blobdel"/></svg></b><b class="ic off"><svg><use href="#blob"/></svg></b><b class="ic off"><svg><use href="#hexa"/></svg></b><b class="ic off"><svg><use href="#seg"/></svg></b><b class="ic off"><svg><use href="#split"/></svg></b><b class="ic off"><svg><use href="#sciss"/></svg></b><b class="ic off"><svg><use href="#sciss"/></svg></b><b class="ic off"><svg><use href="#shell"/></svg></b><b class="ic off"><svg><use href="#lines"/></svg></b>
    <b class="ic off shift"><svg><use href="#offtri"/></svg></b><i class="dd off"></i>
    <input class="gc" value="MapTiler Ge…" readonly>
    <i class="hd"></i>
    <b class="ic"><svg><use href="#curve"/></svg></b>
    <i class="hd"></i>
    <b class="ic"><svg><use href="#selrect"/></svg></b><i class="dd"></i><b class="ic"><svg><use href="#seltri"/></svg></b><i class="dd"></i><b class="ic"><svg><use href="#seldel"/></svg></b><i class="dd"></i>
  </div>

  <div class="toolbar last">
    <i class="hd first"></i>
    <b class="ic"><svg><use href="#qsearch"/></svg></b><b class="ic"><svg><use href="#mapedit"/></svg></b>
  </div>

  <main class="main">
    <aside class="left">
      <div class="dockhead">
        <span>浏览</span>
        <em class="dockbtns"><svg><use href="#dock"/></svg><svg><use href="#dockx"/></svg></em>
      </div>
      <div class="docktools">
        <b class="sic"><svg><use href="#addfile"/></svg></b><b class="sic"><svg><use href="#refresh"/></svg></b><b class="sic"><svg><use href="#filter"/></svg></b><b class="sic"><svg><use href="#collapse"/></svg></b><b class="sic"><svg><use href="#info"/></svg></b>
      </div>
      <div class="treebox">
        <div class="treerow">
          <ul class="tree">
            <li class="lv2"><i class="ar r"></i><svg><use href="#folder"/></svg><span>Shapefiles</span></li>
            <li class="lv2"><i class="ar r"></i><svg><use href="#folder"/></svg><span>SRTM</span></li>
            <li class="lv2"><i class="ar r"></i><svg><use href="#folder"/></svg><span>北京SRTM</span></li>
            <li class="lv2"><i class="ar d"></i><svg><use href="#folder2"/></svg><span>时间序列动画</span></li>
            <li class="lv3"><i class="ar d"></i><svg><use href="#folder2"/></svg><span>asam_data_download</span></li>
            <li class="lv4 cur"><i class="ar"></i><svg><use href="#poly"/></svg><span>ASAM_events</span></li>
            <li class="lv3"><i class="ar d"></i><svg><use href="#folder2"/></svg><span>ASAM_shp</span></li>
            <li class="lv4"><i class="ar d"></i><svg><use href="#folder2"/></svg><span>asam_data_download</span></li>
            <li class="lv5"><i class="ar"></i><svg><use href="#poly2"/></svg><span>ASAM_events</span></li>
            <li class="lv3"><i class="ar d"></i><svg><use href="#folder2"/></svg><span>ne_10m_land</span></li>
            <li class="lv4"><i class="ar"></i><svg><use href="#xml"/></svg><span>ne_10m_land</span></li>
            <li class="lv4"><i class="ar"></i><svg><use href="#poly2"/></svg><span>ne_10m_land</span></li>
            <li class="lv4"><i class="ar"></i><svg><use href="#raster"/></svg><span>ne_10m_land</span></li>
            <li class="lv4"><i class="ar"></i><svg><use href="#poly2"/></svg><span>ne_10m_land</span></li>
            <li class="lv3"><i class="ar r"></i><svg><use href="#qgis"/></svg><span>动画</span></li>
            <li class="lv2"><i class="ar"></i><svg><use href="#csv"/></svg><span>2019-02-surrey-street</span></li>
            <li class="lv2"><i class="ar r"></i><svg><use href="#zip"/></svg><span>QGIS-Training-Data</span></li>
            <li class="lv2"><i class="ar r"></i><svg><use href="#zip"/></svg><span>Shapefiles.zip</span></li>
            <li class="lv0"><i class="ar d"></i><svg><use href="#bmkfav"/></svg><span>空间书签</span></li>
            <li class="lv1"><i class="ar r"></i><svg><use href="#folder"/></svg><span>用户书签</span></li>
          </ul>
          <div class="vbar">
            <i class="sb up"></i><i class="trk h1"></i><i class="thumb h2"></i><i class="trk grow"></i><i class="sb dn"></i>
          </div>
        </div>
        <div class="hbar">
          <i class="sb lf"></i><i class="thumb w1"></i><i class="trk grow"></i><i class="sb rt"></i><i class="corner"></i>
        </div>
      </div>
      <div class="split"><i></i></div>
      <div class="dockhead small">
        <span>图层</span>
        <em class="dockbtns"><svg><use href="#dock"/></svg><svg><use href="#dockx"/></svg></em>
      </div>
      <div class="docktools tall">
        <b class="sic"><svg><use href="#brush"/></svg></b><b class="sic"><svg><use href="#addgroup"/></svg></b><b class="sic"><svg><use href="#eye"/></svg></b><b class="sic"><svg><use href="#filter"/></svg></b><b class="sic"><svg><use href="#eps"/></svg></b><i class="dd tiny"></i><b class="sic"><svg><use href="#expand"/></svg></b><b class="sic"><svg><use href="#collapse"/></svg></b><b class="sic"><svg><use href="#remove"/></svg></b>
      </div>
      <div class="layers">
        <div class="layer cur"><i class="chk">✓</i><i class="dot"></i><u>海盗事件</u></div>
        <div class="layer"><i class="chk">✓</i><i class="swatch"></i><strong>陆地</strong></div>
      </div>
    </aside>

    <section class="right">
      <div class="mapbox">
        <svg class="map" viewBox="257 182 1663 453" id="map">
          <g transform="translate(1088 400.5) scale(2.483 -2.483)" fill="#fdbf6f" stroke="#fdbf6f" stroke-width=".25" stroke-linejoin="round">
            <path d="M-180 65-173 64-170 66-175 68-178 69-180 69Z"/>
            <path d="M-168 66-166 68-162 70-156 71-150 70-141 70-135 69-128 70-122 70-115 68-108 68-100 68-95 68-94 72-90 69-85 69-82 66-87 64-94 60-92 57-88 57-85 55-82 52-79 51-79 55-77 58-78 62-73 62-70 60-65 59-62 56-60 55-56 52-60 50-66 50-70 47-65 49-64 46-61 46-66 44-70 43-71 41-74 40-76 37-76 35-78 34-81 31-80 26-81 25-82 28-84 30-89 30-94 29-97 27-98 22-96 19-92 18-90 21-87 21-88 16-84 15-83 11-80 9-77 8-80 7-84 9-86 11-90 13-94 16-100 17-105 20-106 23-110 27-113 31-115 31-112 26-110 23-113 26-117 33-120 34-124 40-124 48-128 51-133 56-140 60-148 60-152 58-158 56-165 54-158 58-162 60-166 62-162 64Z"/>
            <path d="M-73 78-68 80-60 82-45 83-35 83.500-25 82-18 81-20 76-20 74-24 70-32 68-40 65-44 60-50 62-54 68-55 72-58 75-68 76Z"/>
            <path d="M-80 73-70 71-65 68-62 66-66 62-72 64-78 68-88 71ZM-117 72-105 73-102 69-115 69ZM-90 77-75 78-62 82-75 83-92 81ZM-124 74-116 75-120 71ZM-110 76-95 76-100 74-110 74ZM-97 73-90 74-92 71ZM-60 49-54 47-56 51ZM-128 53-123 49-126 49ZM-120 77-112 78-116 75ZM-100 80-88 80-95 78Z"/>
            <path d="M-78 8-72 12-62 10-57 6-52 5-50 0-44-2-38-4-35-6-35-9-39-14-39-20-44-23-48-26-50-30-53-33-57-36-58-38-63-39-65-43-66-47-69-52-68-55-72-54-75-50-73-40-71-30-70-18-76-14-81-6-80-2-80 1-77 4Z"/>
            <path d="M-9 37-9 43-2 43-1 46-5 48 1 50 4 52 8 54 8 57 10 57 11 54 14 54 20 54 21 57 24 59 30 60 23 60 21 63 25 65 22 66 17 62 18 59 13 55 11 59 5 59 5 62 12 66 20 70 26 71 33 70 40 67 33 66 40 64 44 66 44 68 54 69 60 69 68 69 68 72 70 73 75 72 80 73 87 75 100 76 105 78 113 74 125 73 130 71 140 73 150 71 160 70 170 70 180 69 180 65 178 62 170 60 163 58 162 55 156 51 156 57 163 62 155 59 143 59 135 54 141 52 138 47 135 44 130 42 127 39 129 36 126 34 126 37 125 39 121 39 118 38 122 37 120 34 122 30 120 26 114 22 108 21 106 19 109 13 105 9 100 13 100 8 104 1 101 3 98 8 98 16 94 16 94 19 90 22 86 20 80 15 80 10 77 8 73 18 72 21 67 25 62 25 57 26 51 30 48 30 51 25 56 25 59 22 55 17 45 13 43 13 39 21 35 28 33 28 35 32 36 36 30 36 27 37 26 40 23 40 23 37 20 40 18 41 13 45 16 41 12 43 8 44 3 43 0 39-2 37-5 36Z"/>
            <path d="M-6 36 10 37 11 33 20 31 25 32 33 31 34 28 36 22 38 18 43 12 51 12 48 5 40-3 39-8 40-15 35-20 35-24 32-28 27-34 20-35 18-33 14-22 12-15 13-6 9 0 9 4 4 6-4 5-8 4-13 8-17 13-17 20-13 27-9 32Z"/>
            <path d="M49-12 50-16 47-25 44-25 43-20 44-16Z"/>
            <path d="M114-22 122-18 126-14 131-11 135-12 136-15 140-17 142-11 146-19 153-26 153-31 150-37 146-39 140-38 136-35 131-32 124-33 116-35 115-32Z"/>
            <path d="M145-41 148-41 147-43.500 146-43.500ZM173-35 178-38 175-41 172-40ZM172-41 174-42 168-46 167-45Z"/>
            <path d="M130 33 135 34 140 35 141 40 141 41 139 38 136 36 131 35ZM141 45 145 44 142 42ZM142 54 143 50 143 46 142 49Z"/>
            <path d="M95 5 100 2 104-3 106-6 101-3ZM109 1 117 7 119 1 116-4 110-2ZM105-6 114-8 106-8ZM120 1 124 1 122-5 120-4ZM131-1 141-3 150-9 146-8 138-8 133-3ZM120 18 122 16 124 13 120 14ZM122 9 126 7 125 5 122 7ZM80 9 82 7 81 6ZM120 25 121 23 120 22Z"/>
            <path d="M-5 50 1 51-2 56-4 58-6 56-3 54ZM-10 52-6 52-6 55-10 54ZM-24 65-14 66-15 64-22 63ZM-84 22-75 20-80 23ZM-74 19-68 19-70 18-74 18ZM12 79 25 80 20 77ZM52 71 68 77 58 74ZM9 41 10 39 8 39ZM13 38 15 37 12 38Z"/>
            <path d="M-180-84.500-173-83-158-79-150-75.500-127-74-104-73-84-78-68-71.600-60-64-56-62-60-74-65-81-57-83-50-80-36-79-20-75-4.500-71 15-70 30-69 52-66 62-68 68-73 72.500-68 85-66.500 103-66 125-66.500 145-67.500 160-70 170-71 163-73.600 170-79 160-81 180-84.500 180-90-180-90Z"/>
          </g>
          <g fill="#fff">
            <path d="M1157 292 1165 287 1180 286 1190 295 1178 299 1162 299Z"/>
            <path d="M1208 285 1218 284 1222 295 1222 308 1212 307 1214 295Z"/>
            <path d="M860 281 875 279 885 285 898 293 893 297 880 299 875 290 862 287Z"/>
          </g>
          <g id="incidents"></g>
        </svg>
      </div>

      <div class="attr">
        <div class="attrhead">
          <span>海盗事件 — Features Total: 6783, Filtered: 6783, Selected: 0</span>
          <em class="dockbtns"><svg><use href="#dock"/></svg><svg><use href="#dockx"/></svg></em>
        </div>
        <div class="attrtools">
          <b class="tic"><svg><use href="#pencil"/></svg></b><b class="tic off"><svg><use href="#digit"/></svg></b><b class="tic off"><svg><use href="#save"/></svg></b><b class="tic"><svg><use href="#refresh"/></svg></b><i class="sep"></i>
          <b class="tic off"><svg><use href="#newattr"/></svg></b><b class="tic off"><svg><use href="#trash"/></svg></b><b class="tic off"><svg><use href="#cut"/></svg></b><b class="tic off"><svg><use href="#copy"/></svg></b><b class="tic off"><svg><use href="#paste"/></svg></b><i class="sep"></i>
          <b class="tic"><svg><use href="#eps2"/></svg></b><b class="tic"><svg><use href="#bars"/></svg></b><b class="tic"><svg><use href="#seltri"/></svg></b><b class="tic"><svg><use href="#seladd"/></svg></b><b class="tic"><svg><use href="#filter"/></svg></b><b class="tic"><svg><use href="#selmov"/></svg></b><b class="tic"><svg><use href="#pansel"/></svg></b><b class="tic"><svg><use href="#zoomsel"/></svg></b><i class="sep"></i>
          <b class="tic off"><svg><use href="#newattr"/></svg></b><b class="tic off"><svg><use href="#newattr"/></svg></b><b class="tic"><svg><use href="#coledit"/></svg></b><b class="tic"><svg><use href="#abacus"/></svg></b><i class="sep"></i>
          <b class="tic"><svg><use href="#form"/></svg></b><i class="sep"></i>
          <b class="tic on"><svg><use href="#formt"/></svg></b><b class="tic"><svg><use href="#zoomtab"/></svg></b>
        </div>
        <div class="tblwrap">
          <div class="tblscroll">
            <table class="tbl">
              <thead>
                <tr><th class="rn"></th><th><span>reference</span></th><th class="sorted"><span>dateofocc</span></th><th><span>subreg</span></th><th><span>hostility</span></th><th><span>victim_d</span></th><th><span>descriptio</span></th><th><span>hostilityt</span></th><th><span>hostilit_D</span></th><th><span>victim_l</span></th><th><span>victim_l_D</span></th><th><span>navarea</span></th></tr>
              </thead>
              <tbody>
                <tr><th class="rn">6776</th><td>2018-11</td><td class="n">2017-12-28</td><td class="tight">24</td><td>Pirates</td><td>Sailing Vessel</td><td>VENEZUELA:O...</td><td class="n">1</td><td>Pirate Assault</td><td class="n">8</td><td>Sailing Vessel</td><td>IV</td></tr>
                <tr><th class="rn">6777</th><td>2018-4</td><td class="n">2017-12-28</td><td class="tight">24</td><td>Robbers</td><td>Sailing Vessel</td><td>BRAZIL:On 28 ...</td><td class="n">1</td><td>Pirate Assault</td><td class="n">8</td><td>Sailing Vessel</td><td>V</td></tr>
                <tr><th class="rn">6778</th><td>2018-7</td><td class="n">2017-12-28</td><td class="tight">71</td><td>Robbers</td><td>Bulk Carrier</td><td>SINGAPORE S...</td><td class="n">1</td><td>Pirate Assault</td><td class="n">3</td><td>Cargo Ship</td><td>XI</td></tr>
                <tr><th class="rn">6779</th><td>2018-3</td><td class="n">2017-12-29</td><td class="tight">24</td><td>Robbers</td><td>Vessel</td><td>COLOMBIA:O...</td><td class="n">1</td><td>Pirate Assault</td><td class="n">11</td><td>Vessel</td><td>IV</td></tr>
                <tr><th class="rn">6780</th><td>2018-9</td><td class="n">2017-12-29</td><td class="tight">94</td><td>Robbers</td><td>Bulk Carrier</td><td>CHINA:On 29 ...</td><td class="n">1</td><td>Pirate Assault</td><td class="n">3</td><td>Cargo Ship</td><td>XI</td></tr>
                <tr><th class="rn">6781</th><td>2018-6</td><td class="n">2017-12-31</td><td class="tight">63</td><td>Robbers</td><td>Barge</td><td>BANGLADESH...</td><td class="n">1</td><td>Pirate Assault</td><td class="n">2</td><td>Barge</td><td>VIII</td></tr>
                <tr><th class="rn">6782</th><td>2018-31</td><td class="n">2018-01-01</td><td class="tight">93</td><td>Robbers</td><td>Vessel</td><td>VIETNAM:On ...</td><td class="n">1</td><td>Pirate Assault</td><td class="n">11</td><td>Vessel</td><td>XI</td></tr>
                <tr><th class="rn">6783</th><td>2018-42</td><td class="n">2018-01-01</td><td class="tight">91</td><td>Robbers</td><td>Container Ves...</td><td>PHILIPPINES:O...</td><td class="n">1</td><td>Pirate Assault</td><td class="n">3</td><td>Cargo Ship</td><td>XI</td></tr>
              </tbody>
            </table>
          </div>
          <div class="vbar tbar">
            <i class="sb up"></i><i class="trk grow"></i><i class="thumb h3"></i><i class="sb dn"></i>
          </div>
          <!-- red mark drawn over the date column -->
          <div class="redbox"></div>
        </div>
        <div class="attrfoot">
          <button class="showall"><svg><use href="#filter"/></svg><span>显示所有要素</span><i class="dd tiny"></i></button>
          <div class="viewbtns">
            <b class="vbtn"><svg><use href="#attrview"/></svg></b><b class="vbtn on"><svg><use href="#tableview"/></svg></b>
          </div>
        </div>
      </div>
    </section>
  </main>

  <footer class="status">
    <label class="locator"><svg><use href="#search"/></svg><span>键入以定位(Ctrl+K)</span></label>
    <span class="msgtext">切换当前图层的编辑状态</span>
    <div class="stright">
      <span class="lb">坐标</span>
      <span class="box coord">101.7,-94.0</span>
      <svg class="st cap"><use href="#capture"/></svg>
      <span class="lb l-scale">比例尺</span>
      <span class="box scale">1:202,836,752<i class="dd"></i></span>
      <svg class="st lockic"><use href="#lock"/></svg>
      <span class="lb l-mag">放大镜</span>
      <span class="box spin mag">100%<i class="updown"></i></span>
      <span class="lb l-rot">旋转角度</span>
      <span class="box spin rot">0.0°<i class="updown"></i></span>
      <i class="chk small">✓</i>
      <span class="lb">渲染</span>
      <svg class="st crs"><use href="#crs"/></svg>
      <span class="epsg">EPSG:4326</span>
      <svg class="st msg"><use href="#msg"/></svg>
    </div>
    <span class="wm">https://blog.csdn.net/QGISClass</span>
  </footer>

  <script src="map.js"></script>
</body>
</html>
```

FILE: styles.css
```css
* { box-sizing: border-box; }
html, body { margin: 0; padding: 0; }
body {
  width: 1920px; height: 1080px; overflow: hidden;
  display: flex; flex-direction: column;
  background: #f0f0f0; color: #111;
  font: 15.5px Roboto, "Noto Sans CJK SC", sans-serif;
}
i, em, b { font-style: normal; font-weight: normal; }
.defs { display: none; }
.svgt { font-family: "Liberation Serif", serif; font-weight: 700; }
.svgb { font-family: "Liberation Serif", serif; font-weight: 700; font-style: italic; }
.svgs { font-family: "Liberation Serif", serif; }

/* menu */
.menu {
  height: 25px; padding-left: 11px; display: flex; align-items: center; gap: 15.3px;
  background: #f5f5f5; border-bottom: 1px solid #c4c4c4; line-height: 24px; font-size: 15px;
}
.menu span { white-space: nowrap; }

/* toolbars */
.toolbar {
  height: 39px; display: flex; align-items: center;
  background: linear-gradient(#fafafa, #f0f0f0); border-bottom: 1px solid #bdbdbd;
}
.toolbar.last { height: 38px; }
.hd {
  width: 18px; height: 22px; flex: none;
  background: radial-gradient(circle, #b0b0b0 0.8px, transparent 1px) center / 3px 4px repeat-y;
}
.hd.first { width: 14.5px; background-position: 6px 0; }
.hd.tight { width: 21px; }
.ic {
  width: 33px; height: 33px; flex: none; display: flex; align-items: center; justify-content: center;
  border: 1px solid transparent; border-radius: 3px;
}
.ic svg { width: 24px; height: 24px; }
.ic.on { background: #dcdcdc; border-color: #adadad; width: 32px; height: 32px; margin: 0 .5px; }
.ic.boxed svg { background: #a9c0d8; border: 1px solid #6f8ca8; border-radius: 2px; width: 26px; height: 26px; }
.ic.shift { margin-left: 2px; }
.off svg { opacity: .55; filter: grayscale(1); }
.dd {
  width: 14px; height: 33px; flex: none; position: relative; display: block;
}
.dd::after {
  content: ""; position: absolute; left: 2px; top: 14px;
  border: 5px solid transparent; border-top: 6px solid #555; border-bottom: 0;
}
.dd.off::after { border-top-color: #aaa; }
.dd.tiny { width: 14px; height: 18px; }
.dd.tiny::after { top: 7px; left: 1px; }
.sep {
  width: 6px; height: 24px; flex: none; position: relative; display: block;
}
.sep.wide { width: 7px; }
.sep.wider { width: 10px; }
.sep::after { content: ""; position: absolute; left: 3px; top: 2px; bottom: 2px; width: 1px; background: #ccc; }
.gc {
  width: 142px; height: 24px; margin: 0 1px 0 18px; flex: none; padding: 0 2px;
  border: 1px solid #b8b8b8; border-radius: 3px; background: #fff; color: #555;
  font: 13px "Liberation Mono", monospace;
}

/* main area */
.main { height: 868px; display: flex; flex: none; }
.left { width: 250px; flex: none; display: flex; flex-direction: column; }
.right { flex: 1; margin-left: 6px; min-width: 0; display: flex; flex-direction: column; }

.dockhead {
  height: 24px; padding: 0 3px 0 4px; display: flex; align-items: center; justify-content: space-between;
}
.dockhead.small { height: 22px; }
.dockbtns { display: flex; gap: 1px; height: 13px; }
.dockbtns svg { width: 13px; height: 13px; }
.docktools { height: 28px; display: flex; align-items: center; padding: 0 0 4px 3px; }
.docktools.tall { height: 28px; padding-bottom: 3px; }
.sic { width: 25px; height: 24px; display: flex; align-items: center; justify-content: center; flex: none; }
.sic svg { width: 17px; height: 17px; }

/* browser tree */
.treebox { height: 455px; border: 1px solid #bcbcbc; background: #fff; display: flex; flex-direction: column; }
.treerow { flex: 1; display: flex; min-height: 0; }
.tree { flex: 1; margin: -1px 0 0; padding: 0; list-style: none; overflow: hidden; min-width: 0; }
.tree li { height: 22px; display: flex; align-items: center; white-space: nowrap; overflow: hidden; }
.tree li svg { width: 23px; height: 23px; flex: none; margin: 0 5px 0 0; }
.tree .cur { background: #f0f0f0; }
.lv0 { padding-left: 4px; } .lv1 { padding-left: 29px; } .lv2 { padding-left: 54px; }
.lv3 { padding-left: 79px; } .lv4 { padding-left: 104px; } .lv5 { padding-left: 129px; }
.ar { width: 23px; height: 10px; flex: none; position: relative; display: block; }
.ar.r::after {
  content: ""; position: absolute; left: 6px; top: 0;
  border: 5px solid transparent; border-left: 5px solid #555; border-right: 0;
}
.ar.d::after {
  content: ""; position: absolute; left: 3px; top: 3px;
  border: 5px solid transparent; border-top: 5px solid #555; border-bottom: 0;
}

/* scrollbars */
.vbar { width: 17px; flex: none; display: flex; flex-direction: column; border-left: 1px solid #d0d0d0; }
.hbar { height: 17px; flex: none; display: flex; border-top: 1px solid #c8c8c8; }
.sb { display: block; flex: none; width: 16px; height: 16px; background: #fff; position: relative; }
.sb::after { content: ""; position: absolute; border: 5px solid transparent; }
.sb.up::after { left: 3px; top: 2px; border-bottom: 5px solid #555; border-top: 0; }
.sb.dn::after { left: 3px; top: 6px; border-top: 5px solid #555; border-bottom: 0; }
.sb.lf::after { left: 3px; top: 3px; border-right: 5px solid #555; border-left: 0; }
.sb.rt::after { left: 7px; top: 3px; border-left: 5px solid #555; border-right: 0; }
.trk { display: block; background: #e6e6e6; }
.trk.h1 { height: 110px; }
.trk.grow { flex: 1; }
.thumb { display: block; background: #fff; border: 1px solid #d0d0d0; }
.thumb.h2 { height: 114px; }
.thumb.h3 { height: 34px; }
.thumb.w1 { width: 76px; }
.corner { display: block; width: 17px; border-left: 1px solid #d0d0d0; }

.split { height: 7px; position: relative; }
.split i {
  position: absolute; left: 118px; top: 2px; width: 16px; height: 2px;
  background: radial-gradient(circle, #aaa .8px, transparent 1px) 0 0 / 3px 2px repeat-x;
}

/* layers */
.layers { flex: 1; background: #fff; border: 1px solid #bcbcbc; border-top-color: #d8d8d8; }
.layer { height: 21.5px; display: flex; align-items: center; padding-left: 28px; font-weight: 700; }
.layer.cur { background: #f0f0f0; }
.layer strong { font-weight: 700; margin-left: 6px; }
.layer u { margin-left: 9px; }
.chk {
  width: 17px; height: 17px; flex: none; background: #fff; border: 1px solid #b5b5b5;
  display: flex; align-items: center; justify-content: center;
  font: 700 18px/1 "DejaVu Sans", sans-serif; color: #111;
}
.dot { width: 11px; height: 11px; border-radius: 50%; background: #7c4a63; margin-left: 11px; flex: none; }
.swatch { width: 18px; height: 18px; background: #fdbf6f; margin-left: 6px; flex: none; }

/* map */
.mapbox { height: 455px; flex: none; border-top: 1px solid #bcbcbc; border-bottom: 1px solid #bcbcbc; background: #fff; margin-top: 1px; }
.map { display: block; width: 100%; height: 100%; }

/* attribute table */
.attr { flex: 1; display: flex; flex-direction: column; min-height: 0; margin-top: 4px; }
.attrhead {
  height: 26px; flex: none; padding: 0 0 0 8px; display: flex; align-items: center; justify-content: space-between;
  font-size: 16px; letter-spacing: .2px;
}
.attrhead .dockbtns { margin-right: 2px; }
.attrtools { height: 26px; flex: none; display: flex; align-items: center; padding: 0 0 3px 3px; }
.tic { width: 25px; height: 23px; display: flex; align-items: center; justify-content: center; flex: none; border: 1px solid transparent; border-radius: 3px; }
.tic svg { width: 18px; height: 18px; }
.tic.on { background: #dcdcdc; border-color: #adadad; }
.attrtools .sep { width: 8px; }
.attrtools .sep::after { left: 4px; }

.tblwrap { height: 322px; flex: none; display: flex; position: relative; border-top: 1px solid #bcbcbc; border-bottom: 1px solid #bcbcbc; }
.tblscroll { flex: 1; background: #fff; min-width: 0; overflow: hidden; position: relative; }
.tblscroll::before { content: ""; position: absolute; left: 0; right: 0; top: 0; height: 24px; background: #f0f0f0; }
.tbl { border-collapse: separate; border-spacing: 0; table-layout: fixed; width: 1416px; position: relative; font-size: 16px; }
.tbl th, .tbl td { width: 125px; padding: 0; }
.tbl .rn { width: 41px; }
.tbl thead th {
  height: 24px; font-weight: normal; text-align: center; position: relative;
  background: linear-gradient(#fff, #f0f0f0);
  border-right: 1px solid #d4d4d4; border-bottom: 1px solid #bcbcbc;
}
.tbl thead th span { display: inline-block; height: 18px; line-height: 19px; margin-top: 2px; overflow: hidden; vertical-align: middle; }
.tbl .sorted span { margin-right: 14px; }
.tbl .sorted::after {
  content: ""; position: absolute; right: 4px; top: 8px;
  border: 5px solid transparent; border-bottom: 6px solid #555; border-top: 0;
}
.tbl td, .tbl tbody th {
  height: 37px; border-right: 1px solid #c8c8c8; border-bottom: 1px solid #c8c8c8;
  white-space: nowrap; overflow: hidden;
}
.tbl td { padding: 0 3px 0 4px; }
.tbl td.n { text-align: right; padding-right: 3px; }
.tbl td.tight { padding-left: 2px; }
.tbl tbody th {
  font-weight: normal; text-align: center; padding: 0;
  background: linear-gradient(#fff, #ececec);
}
.tbl tbody tr:nth-child(odd) td { background: #e7e5e1; }
.tbar { width: 18px; border-left: 1px solid #c8c8c8; border-right: 1px solid #c8c8c8; margin-right: 1px; }
.redbox {
  position: absolute; left: 164px; top: -1px; width: 129px; height: 324px;
  border: 4px solid #ed1c24; pointer-events: none;
}
.attrfoot { flex: 1; display: flex; justify-content: space-between; padding: 3px 2px 0 3px; }
.showall {
  width: 138px; height: 26px; padding: 0 0 0 4px; display: flex; align-items: center;
  background: #f6f6f6; border: 1px solid #bcbcbc; border-radius: 3px;
  font: 15px Roboto, "Noto Sans CJK SC", sans-serif; color: #111;
}
.showall svg { width: 20px; height: 20px; margin-right: 4px; flex: none; }
.showall span { flex: 1; text-align: left; white-space: nowrap; }
.showall .dd.tiny { height: 14px; width: 11px; align-self: flex-end; }
.showall .dd.tiny::after { top: 4px; border-width: 4px; border-top-width: 5px; }
.viewbtns { display: flex; gap: 4px; }
.vbtn { width: 27px; height: 26px; display: flex; align-items: center; justify-content: center; border: 1px solid transparent; border-radius: 3px; }
.vbtn svg { width: 20px; height: 20px; }
.vbtn.on { background: #dcdcdc; border-color: #adadad; }

/* status bar */
.status { flex: 1; display: flex; align-items: center; position: relative; font-size: 12px; padding-left: 4px; }
.locator {
  width: 243px; height: 23px; flex: none; display: flex; align-items: center; padding-left: 6px;
  background: #fff; border: 1px solid #c4c4c4; border-radius: 3px; color: #777;
  font: 13px "Liberation Mono", "Noto Sans CJK SC", monospace;
}
.locator svg { width: 15px; height: 15px; margin-right: 14px; flex: none; }
.msgtext { margin-left: 9px; letter-spacing: 1px; }
.stright { position: absolute; left: 1032px; right: 0; top: 0; bottom: 0; display: flex; align-items: center; white-space: nowrap; }
.lb { letter-spacing: 1px; }
.box {
  height: 23px; flex: none; display: flex; align-items: center; position: relative;
  background: #fff; border: 1px solid #c4c4c4; border-radius: 3px;
  font: 12px "Liberation Mono", monospace; padding-left: 6px;
}
.coord { width: 91px; margin-left: 4px; }
.st { width: 22px; height: 22px; flex: none; }
.cap { margin-left: 3px; }
.l-scale { margin-left: 13px; }
.scale { width: 118px; margin-left: 3px; padding-left: 1px; }
.scale .dd { position: absolute; right: 3px; top: -6px; }
.lockic { margin-left: 9px; }
.l-mag { margin-left: 8px; }
.mag { width: 104px; margin-left: 5px; }
.l-rot { margin-left: 11px; }
.rot { width: 100px; margin-left: 8px; }
.updown { position: absolute; right: 0; top: 0; bottom: 0; width: 16px; border-left: 1px solid #ddd; }
.updown::before, .updown::after { content: ""; position: absolute; left: 3px; border: 5px solid transparent; }
.updown::before { top: 2px; border-bottom: 6px solid #666; border-top: 0; }
.updown::after { bottom: 2px; border-top: 6px solid #666; border-bottom: 0; }
.chk.small { margin: 0 6px 0 8px; width: 16px; }
.crs { margin-left: 20px; width: 18px; height: 18px; }
.epsg { font: 12.5px "Liberation Mono", monospace; margin-left: 1px; letter-spacing: -.5px; }
.msg { margin-left: 27px; }
.wm {
  position: absolute; left: 1695px; top: 3px; font-size: 18px; color: rgba(110, 110, 110, .14); white-space: nowrap;
}
```

FILE: map.js
```js
// incident points, read off the reference crops (x / 2.613, y / 3)
const west = [[454,410],[493,458],[219,545],[93,647],[238,785],[251,792],[740,356],[760,350],[710,461],[582,545],[616,524],[622,557],[645,563],[648,540],[665,540],[685,490],[685,548],[695,518],[722,525],[752,520],[765,512],[770,522],[798,525],[815,528],[825,555],[830,570],[870,527],[948,557],[997,602],
  [685,592],[705,590],[732,585],[757,585],[773,570],[800,585],[835,600],[850,612],[872,618],[722,632],[672,635],[705,655],[685,658],[700,680],[695,698],[692,714],[710,722],[720,750],[726,765],[760,792],
  [890,662],[908,668],[935,680],[972,690],[995,700],[1005,716],[995,722],[972,758],[972,795],[943,832],[922,838],[925,850],[905,850],[885,900],[844,908],[741,950],
  [1205,263],[1217,260],[1241,278],[1301,257],[1183,298],[1252,338],[1283,342],[1283,352],[1314,358],[1346,347],[1405,323],[1400,345],[1385,356],[1374,372],[1492,347],[1403,385],[1453,407],[1162,360],[1163,365],[1047,371],[1113,395],[1243,386],[1272,383],[1322,386],[1310,392],[1300,417],[1323,417],[1353,423],[1375,417],[1380,423],[1415,420],[1417,430],[1435,440],[1442,457],[1174,410],[1163,420],[1160,435],[1123,452],[1131,458],[1071,482],[1061,536],[1113,508],[1120,515],[1113,537],[1105,547],[1110,575],[1112,587],
  [1130,590],[1137,598],[1153,615],[1165,632],[1185,635],[1197,625],[1212,625],[1230,618],[1240,612],[1250,620],[1265,635],[1280,630],[1290,628],[1285,660],[1262,660],[1237,653],[1268,690],[1243,708],[1243,740],[1298,693],[1307,704],[1307,726],[1122,727],[1110,743],[1375,551],
  [1422,884],[1418,893],[1450,810],[1465,795],[1480,800],[1525,780],[1545,797]];
const east = [[734,155],[825,458],[500,347],[545,437],[548,442],[557,460],[572,482],[478,503],[480,520],[490,545],[510,565],
  [720,590],[750,590],[770,525],[755,555],[785,548],[737,622],[760,620],[790,617],[785,655],[783,670],[770,685],[820,718],[800,500],[815,495],[825,497],[830,515],[838,555],[855,537],[835,615],
  [925,505],[968,490],[947,505],[958,538],[882,565],[1000,497],[1015,470],[1025,470],[1008,530],[1015,550],[1030,580],[1000,372],[1005,372],[1018,372],[1030,383],[1050,383],[1095,386],[1122,383],[1005,400],[1008,420],[1043,410],[1045,430],[1073,432],[1097,540],[1200,560],[1210,600],[1170,630],[1078,605],[1092,648],[1060,672],[1082,670],[1087,690],[1080,716],[1090,733],[1120,725],[1118,745],[1130,740],[1162,686],[1190,668],[1178,700],[1175,720],[1217,692],[1235,702],[1207,725],[1207,738],[1267,733],[1272,727],[1380,668],[1380,792],[1388,798],
  [910,735],[908,755],[932,750],[975,762],[992,770],[1012,783],[985,745],[960,735],[1018,740]];

// dense patches: xmin, xmax, ymin, ymax, count
const westFill = [[640,700,530,570,12],[680,850,575,600,30],[700,790,510,530,10],[795,835,520,580,20],[680,725,630,720,18],[1190,1290,610,650,30]];
const eastFill = [[590,700,465,560,70],[500,700,540,640,110],[480,680,630,720,150],[480,620,720,785,40],[700,780,570,625,18],
  [850,1060,580,700,190],[850,1020,670,725,45],[920,1030,500,590,40],[995,1040,470,590,25]];

let seed = 7;
function rnd() {
  seed = (seed * 16807) % 2147483647;
  return seed / 2147483647;
}

const group = document.getElementById('incidents');

function addDot(baseX, p) {
  const c = document.createElementNS('http://www.w3.org/2000/svg', 'circle');
  c.setAttribute('cx', baseX + p[0] / 2.613);
  c.setAttribute('cy', 180 + p[1] / 3);
  c.setAttribute('r', 4.9);
  c.setAttribute('fill', '#c33737');
  c.setAttribute('stroke', '#33201f');
  c.setAttribute('stroke-width', 1.1);
  group.appendChild(c);
}

// keeps the East African interior clear of the Somali basin patch
function onAfrica(x, y) {
  return x < 700 && y > 540 && y < 700 && x < 475 + (700 - y) * 0.75;
}

function fillPatches(baseX, patches) {
  patches.forEach((f) => {
    for (let i = 0; i < f[4]; i++) {
      const x = f[0] + rnd() * (f[1] - f[0]);
      const y = f[2] + rnd() * (f[3] - f[2]);
      if (baseX === 1000 && onAfrica(x, y)) continue;
      addDot(baseX, [x, y]);
    }
  });
}

fillPatches(620, westFill);
fillPatches(1000, eastFill);
west.forEach((p) => addDot(620, p));
east.forEach((p) => addDot(1000, p));
```
